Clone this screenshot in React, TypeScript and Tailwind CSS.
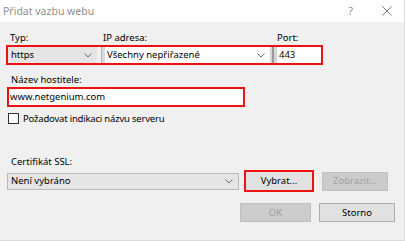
import React from "react";

const Chevron = ({ color = "#6d6d6d" }: { color?: string }) => (
  <svg width="8" height="5" viewBox="0 0 8 5" className="shrink-0">
    <path d="M0.5 0.5 L4 4 L7.5 0.5" fill="none" stroke={color} strokeWidth="1" />
  </svg>
);

export default function App() {
  return (
    <div className="w-[405px] h-[241px] bg-[#f0f0f0] overflow-hidden font-['Noto_Sans',sans-serif] text-[9.5px] leading-[12px] text-black flex flex-col border-r border-b border-[#dcdcdc]">
      {/* Title bar */}
      <div className="h-[22px] bg-white flex items-center shrink-0">
        <span className="pl-[3px] text-[10.5px] text-[#8f8f8f]">Přidat vazbu webu</span>
        <span className="ml-auto mr-[29px] text-[11px] text-[#8f8f8f]">?</span>
        <svg width="10" height="10" viewBox="0 0 10 10" className="mr-[12px]">
          <path d="M0.5 0.5 L9.5 9.5 M9.5 0.5 L0.5 9.5" stroke="#808080" strokeWidth="1" />
        </svg>
      </div>

      {/* Row 1 labels */}
      <div className="flex mt-[10px] h-[12px]">
        <span className="ml-[10px] w-[93px]">Typ:</span>
        <span className="w-[174px]">IP adresa:</span>
        <span>Port:</span>
      </div>

      {/* Row 1 controls */}
      <div className="mt-[1px] ml-[6px] w-[317px] h-[20px] border-2 border-[#ee1111] flex">
        <div className="w-[89px] bg-[#e5e5e5] flex items-center justify-between pl-[3px] pr-[5px]">
          <span>https</span>
          <Chevron />
        </div>
        <div className="w-[8px] flex">
          <div className="w-[4px] bg-[#f0f0f0]" />
          <div className="w-[1px] bg-[#b5b5b5]" />
          <div className="w-[3px] bg-[#dadada]" />
        </div>
        <div className="w-[165px] bg-white flex items-center justify-between pl-[2px] pr-[5px]">
          <span>Všechny nepřiřazené</span>
          <Chevron />
        </div>
        <div className="w-[7px] flex">
          <div className="w-[2px] bg-[#d6d6d6]" />
          <div className="w-[2px] bg-[#9a9a9a]" />
          <div className="w-[3px] bg-[#d6d6d6]" />
        </div>
        <div className="flex-1 bg-white flex items-center pl-[2px]">
          <span>443</span>
        </div>
      </div>

      {/* Row 2 */}
      <div className="mt-[9px] ml-[11px] h-[12px]">Název hostitele:</div>
      <div className="mt-[1px] ml-[7px] w-[238px] h-[20px] border-2 border-[#ee1111] bg-white flex items-center pl-[1px]">
        <span>www.netgenium.com</span>
      </div>

      {/* Checkbox */}
      <div className="mt-[6px] ml-[8px] flex items-center h-[11px]">
        <div className="w-[11px] h-[11px] border border-[#333333] bg-white" />
        <span className="ml-[4px] tracking-[-0.2px]">Požadovat indikaci názvu serveru</span>
      </div>

      {/* Certificate */}
      <div className="mt-[32px] ml-[11px] h-[12px]">Certifikát SSL:</div>
      <div className="mt-[2px] flex items-center h-[22px]">
        <div className="ml-[7px] w-[232px] h-[17px] bg-[#e5e5e5] border border-[#b9b9b9] flex items-center justify-between pl-[3px] pr-[5px]">
          <span>Není vybráno</span>
          <Chevron />
        </div>
        <div className="ml-[5px] w-[70px] h-[22px] border-2 border-[#ee1111] bg-[#e1e1e1] flex items-center justify-center">
          <span>Vybrat...</span>
        </div>
        <div className="ml-[8px] w-[66px] h-[19px] bg-[#cccccc] border border-[#bfbfbf] flex items-center justify-center text-[#a0a0a0]">
          <span>Zobrazit...</span>
        </div>
      </div>

      {/* Bottom buttons */}
      <div className="mt-[11px] flex justify-end pr-[9px] gap-[8px]">
        <div className="w-[71px] h-[19px] bg-[#cccccc] border border-[#bfbfbf] flex items-center justify-center text-[#a0a0a0]">
          OK
        </div>
        <div className="w-[76px] h-[19px] bg-[#e1e1e1] border border-[#adadad] flex items-center justify-center">
          Storno
        </div>
      </div>
    </div>
  );
}
